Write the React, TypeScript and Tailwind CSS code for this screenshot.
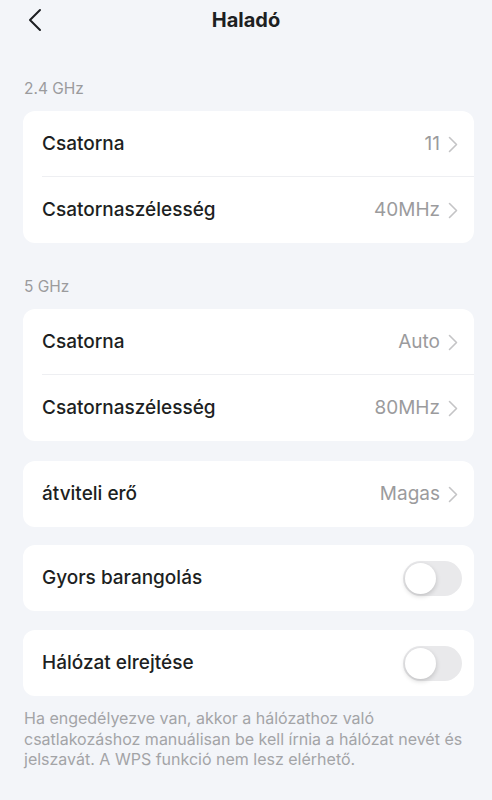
import React from "react";

const Chevron = () => (
  <svg width="10" height="17" viewBox="0 0 10 17" fill="none" className="ml-2">
    <path d="M1.5 1.5L8.5 8.5L1.5 15.5" stroke="#c4c4c6" strokeWidth="1.6" strokeLinecap="round" strokeLinejoin="round" />
  </svg>
);

const Toggle = () => (
  <div className="-mr-[4px] flex h-[35px] w-[59px] items-center rounded-full bg-[#e9e9eb] p-[2px]">
    <div className="h-[31px] w-[31px] rounded-full bg-white shadow-[0_2px_5px_rgba(0,0,0,0.18)]" />
  </div>
);

const Row = ({ label, value, divider }: { label: string; value?: string; divider?: boolean }) => (
  <div className="relative flex h-[66px] items-center pl-[19px] pr-[16px]">
    <span className="flex-1 text-[19px] font-medium text-[#1d1f22]">{label}</span>
    {value !== undefined ? (
      <span className="flex items-center text-[19px] text-[#9b9b9d]">
        {value}
        <Chevron />
      </span>
    ) : (
      <Toggle />
    )}
    {divider && <div className="absolute bottom-0 left-[19px] right-0 h-px bg-[#eeeff2]" />}
  </div>
);

const Card = ({ children }: { children: React.ReactNode }) => (
  <div className="overflow-hidden rounded-[12px] bg-white">{children}</div>
);

export default function App() {
  return (
    <div
      className="min-h-[800px] w-[492px] bg-[#f3f5f9]"
      style={{ fontFamily: "Inter, 'Noto Sans', sans-serif" }}
    >
      <div className="relative flex h-[40px] items-center justify-center">
        <svg width="14" height="24" viewBox="0 0 14 24" fill="none" className="absolute left-[28px] top-[8px]">
          <path d="M12 2L2 12L12 22" stroke="#1d1f22" strokeWidth="2" strokeLinecap="round" strokeLinejoin="round" />
        </svg>
        <h1 className="text-[20px] font-bold text-[#1d1f22]">Haladó</h1>
      </div>

      <div className="px-[23px] pr-[18px]">
        <div className="pb-[11px] pl-px pt-[38px] text-[15.5px] leading-[22px] text-[#9b9b9d]">2.4 GHz</div>
        <Card>
          <Row label="Csatorna" value="11" divider />
          <Row label="Csatornaszélesség" value="40MHz" />
        </Card>

        <div className="pb-[11px] pl-px pt-[33px] text-[15.5px] leading-[22px] text-[#9b9b9d]">5 GHz</div>
        <Card>
          <Row label="Csatorna" value="Auto" divider />
          <Row label="Csatornaszélesség" value="80MHz" />
        </Card>

        <div className="mt-[20px] flex flex-col gap-[18px]">
          <Card>
            <Row label="átviteli erő" value="Magas" />
          </Card>
          <Card>
            <Row label="Gyors barangolás" />
          </Card>
          <div className="mt-px">
            <Card>
              <Row label="Hálózat elrejtése" />
            </Card>
          </div>
        </div>

        <p className="mt-[12px] pl-px text-[16px] leading-[20.5px] text-[#a3a4a7]">
          Ha engedélyezve van, akkor a hálózathoz való csatlakozáshoz manuálisan be kell írnia a hálózat nevét és jelszavát. A WPS funkció nem lesz elérhető.
        </p>
      </div>
    </div>
  );
}
